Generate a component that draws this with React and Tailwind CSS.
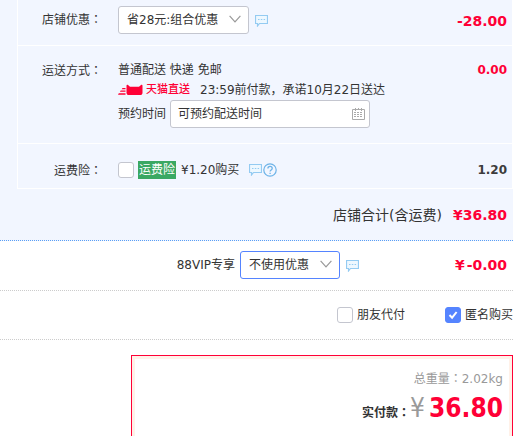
import React, { useState } from 'react';

const ChatIcon = () => (
  <svg width="13" height="13" viewBox="0 0 13 13" fill="none" stroke="#94cbf2" className="shrink-0">
    <path d="M.5 1.5h12v8H4.500L2.500 12V9.500h-2z" fill="#eef8ff" strokeWidth="1.2" />
    <path d="M3 5.500h1.500M5.800 5.500h1.500M8.600 5.500h1.500" strokeWidth="1.2" />
  </svg>
);

const HelpIcon = () => (
  <svg width="14" height="14" viewBox="0 0 14 14" fill="none" stroke="#6db3e8" className="shrink-0">
    <circle cx="7" cy="7" r="6.2" strokeWidth="1.2" />
    <path d="M4.9 5.6c0-3 4.3-2.8 4.3-.2 0 1.5-2.1 1.6-2.1 3.2" strokeWidth="1.3" />
    <path d="M7.1 9.7v1.3" strokeWidth="1.3" />
  </svg>
);

const CalendarIcon = () => (
  <svg width="13" height="13" viewBox="0 0 13 13" fill="none" stroke="#aaa" className="shrink-0">
    <path d="M.5 1.5h12v10H.5z" />
    <path d="M3.5 0v3M9.5 0v3M6.5 0v2" />
    <path d="M2 4.500h9M2 6.500h9M2 8.500h9" strokeDasharray="2 1" />
  </svg>
);

const TmallIcon = () => (
  <svg width="25" height="12" viewBox="0 0 25 12" fill="#ff0036" className="shrink-0">
    <path d="M8.500 1.700c0-1 .8-1.200 1.500-.6l2 1.700h9l2-1.700c.7-.6 1.500-.4 1.500.6v7c0 1.700-1 2.300-2.300 2.300H10.800c-1.300 0-2.300-.6-2.300-2.300z" />
    <path d="M4.500 4h3v1.200H3.700zM2.700 6.500h4.800v1.200H1.900zM.8 9.300h6.700v1.500H0z" />
  </svg>
);

// Full-width colon sitting in the middle of its cell
const Colon = () => <span className="font-['Noto_Sans_CJK_TC',sans-serif]" lang="zh-TW">：</span>;

const Dropdown = ({ label, options, className }) => (
  <div className="relative">
    <select
      aria-label={label}
      className={`block h-7 appearance-none rounded-[3px] border bg-white pl-2 pr-7 text-[#333] outline-none ${className}`}
    >
      {options.map((o) => <option key={o}>{o}</option>)}
    </select>
    <svg width="12" height="8" viewBox="0 0 12 8" fill="none" stroke="#999" strokeWidth="1.2"
      className="pointer-events-none absolute right-2 top-[9px]">
      <path d="M.6.8 6 6.800 11.400.8" />
    </svg>
  </div>
);

const Check = ({ id, checked, onChange }) => (
  <span className="relative flex shrink-0">
    <input
      id={id}
      type="checkbox"
      checked={checked}
      onChange={(e) => onChange(e.target.checked)}
      className="size-4 appearance-none rounded-[3px] border border-[#c4c6cf] bg-white checked:border-[#5584ff] checked:bg-[#5584ff]"
    />
    {checked && (
      <svg width="16" height="16" viewBox="0 0 16 16" fill="none" stroke="#fff" strokeWidth="2" className="pointer-events-none absolute inset-0">
        <path d="m4.500 8 2.600 2.700 4.500-5.700" />
      </svg>
    )}
  </span>
);

const Row = ({ label, labelFor, amount, className, amountClass, children }) => (
  <div className={`flex items-start gap-4 border-b border-r border-white pr-[5px] ${className}`}>
    <label htmlFor={labelFor} className="w-[84px] shrink-0 whitespace-nowrap text-right">
      {label}<Colon />
    </label>
    <div className="min-w-0 flex-1 whitespace-nowrap">{children}</div>
    <span className={`font-bold ${amountClass}`}>{amount}</span>
  </div>
);

const App = () => {
  const [insurance, setInsurance] = useState(false);
  const [friendPay, setFriendPay] = useState(false);
  const [anonymous, setAnonymous] = useState(true);

  return (
    <div
      lang="zh-CN"
      className="flex min-h-screen flex-col bg-white pr-[19px] font-['DejaVu_Sans','Noto_Sans_CJK_SC',sans-serif] text-[12px] leading-[18px] text-[#333]"
    >
      <section className="bg-[#f2f6ff]">
        <div className="ml-[17px] border-l border-white">
          <Row label="店铺优惠" amount="-28.00" className="pb-[11px] pt-[6px] [&>label]:mt-1" amountClass="mt-[6px] text-[14px] text-[#ff0036]">
            <div className="flex items-center gap-[6px]">
              <Dropdown label="店铺优惠" options={['省28元:组合优惠']} className="w-[131px] border-[#c4c6cf]" />
              <ChatIcon />
            </div>
          </Row>

          <Row label="运送方式" labelFor="delivery-time" amount="0.00" className="pb-[15px] pt-[15px]" amountClass="text-[#ff0036]">
            <p>普通配送 快递 免邮</p>
            <div className="flex h-[21px] items-center">
              <TmallIcon />
              <span className="ml-[3px] text-[11px] font-medium text-[#ff0036]">天猫直送</span>
              <span className="ml-[10px]">23:59前付款，承诺10月22日送达</span>
            </div>
            <div className="flex items-center gap-1">
              <label htmlFor="delivery-time">预约时间</label>
              <div className="flex h-7 w-[200px] items-center rounded-[3px] border border-[#c4c6cf] bg-white pl-[7px] pr-1">
                <input id="delivery-time" type="text" placeholder="可预约配送时间"
                  className="min-w-0 flex-1 bg-transparent outline-none placeholder:text-[#333]" />
                <CalendarIcon />
              </div>
            </div>
          </Row>

          <Row label="运费险" labelFor="insurance" amount="1.20" className="pb-[8px] pt-[17px]" amountClass="text-[#3c3c3c]">
            <div className="flex items-center">
              <Check id="insurance" checked={insurance} onChange={setInsurance} />
              <label htmlFor="insurance" className="ml-1 flex items-center gap-[5px]">
                <span className="bg-[#3aa863] px-px text-white">运费险</span>
                <span>¥1.20购买</span>
              </label>
              <span className="ml-[10px] flex gap-px"><ChatIcon /><HelpIcon /></span>
            </div>
          </Row>
        </div>

        <div className="flex items-center justify-end gap-[11px] border-b border-dotted border-[#5a9ff5] pb-4 pr-[6px] pt-[17px] text-[14px]">
          <span>店铺合计(含运费)</span>
          <strong className="text-[#ff0036]">¥36.80</strong>
        </div>
      </section>

      <div className="flex items-center justify-end border-b border-dotted border-[#ccc] pb-[11px] pt-[10px]">
        <span className="mr-[5px]">88VIP专享</span>
        <Dropdown label="88VIP专享" options={['不使用优惠']} className="w-[100px] border-[#5584ff]" />
        <span className="ml-[6px]"><ChatIcon /></span>
        <strong className="w-[154px] pr-[6px] text-right text-[14px] text-[#ff0036]">
          <span className="mr-[2px]">¥</span>-0.00
        </strong>
      </div>

      <div className="flex items-center justify-end gap-10 border-b border-dotted border-[#ccc] pb-[15px] pt-[15px]">
        <label className="flex items-center gap-1">
          <Check id="friend-pay" checked={friendPay} onChange={setFriendPay} />朋友代付
        </label>
        <label className="flex items-center gap-1">
          <Check id="anonymous" checked={anonymous} onChange={setAnonymous} />匿名购买
        </label>
      </div>

      <section className="ml-[131px] mt-[15px] flex flex-1 flex-col border border-b-0 border-[#ff0036]">
        <div className="flex-1 border-[3px] border-b-0 border-[#fff1e8] pr-[6px] pt-[10px] text-right">
          <p className="text-[#999]">总重量<Colon />2.02kg</p>
          <p className="mt-[3px] flex items-baseline justify-end font-['DejaVu_Sans_Condensed','DejaVu_Sans','Noto_Sans_CJK_SC',sans-serif] leading-[34px]">
            <span className="font-bold">实付款<Colon /></span>
            <span className="mr-1 text-[26px] text-[#999]">¥</span>
            <strong className="text-[26px] text-[#ff0036]">36.80</strong>
          </p>
        </div>
      </section>
    </div>
  );
};

export default App;
